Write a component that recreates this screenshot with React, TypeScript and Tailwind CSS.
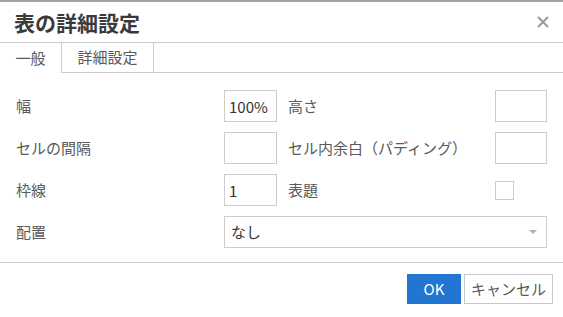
import React from "react";

const font = { fontFamily: '"Noto Sans CJK JP", "Noto Sans", sans-serif' };

function Field({ value = "", w = "w-[53px]" }: { value?: string; w?: string }) {
  return (
    <input
      readOnly
      value={value}
      className={`${w} h-[32px] border border-[#cccccc] bg-white px-[4px] text-[15px] text-[#333333] outline-none`}
    />
  );
}

export default function App() {
  return (
    <div style={font} className="w-[563px] h-[317px] bg-white border-t-2 border-[#a3a3a3] flex flex-col overflow-hidden">
      <div className="h-[41px] flex items-center justify-between pl-[14px] pr-[13px] border-b border-[#cccccc]">
        <div className="text-[21px] font-bold text-[#3a3a3a] leading-none">表の詳細設定</div>
        <svg width="14" height="14" viewBox="0 0 14 14" className="text-[#9a9a9a]">
          <path d="M2 2 L12 12 M12 2 L2 12" stroke="currentColor" strokeWidth="2" />
        </svg>
      </div>

      <div className="flex h-[30px] border-b border-[#cccccc]">
        <div className="w-[62px] -mb-px bg-white border-r border-[#cccccc] flex items-center justify-center text-[15px] text-[#595959]">
          一般
        </div>
        <div className="w-[92px] border-r border-[#cccccc] flex items-center justify-center text-[15px] text-[#595959]">
          詳細設定
        </div>
      </div>

      <div className="flex flex-col gap-[10px] pt-[17px] pl-[16px] pr-[16px] h-[190px] border-b border-[#cccccc] text-[15px] text-[#595959]">
        <div className="flex items-center h-[32px]">
          <div className="w-[208px]">幅</div>
          <Field value="100%" />
          <div className="flex-1 pl-[11px]">高さ</div>
          <Field w="w-[52px]" />
        </div>
        <div className="flex items-center h-[32px]">
          <div className="w-[208px]">セルの間隔</div>
          <Field />
          <div className="flex-1 pl-[11px]">セル内余白（パディング）</div>
          <Field w="w-[52px]" />
        </div>
        <div className="flex items-center h-[32px]">
          <div className="w-[208px]">枠線</div>
          <Field value="1" />
          <div className="flex-1 pl-[11px]">表題</div>
          <div className="w-[52px] flex">
            <div className="w-[19px] h-[19px] border border-[#cccccc] bg-white" />
          </div>
        </div>
        <div className="flex items-center h-[32px]">
          <div className="w-[208px]">配置</div>
          <div className="flex-1 h-[32px] border border-[#cccccc] flex items-center justify-between pl-[6px] pr-[9px] text-[#333333]">
            <span>なし</span>
            <svg width="8" height="5" viewBox="0 0 8 5">
              <path d="M0 0 L8 0 L4 4 Z" fill="#b0b0b0" />
            </svg>
          </div>
        </div>
      </div>

      <div className="flex justify-end gap-[3px] pt-[11px] pr-[10px]">
        <button className="w-[54px] h-[30px] bg-[#2276d2] text-white text-[15px] flex items-center justify-center">
          OK
        </button>
        <button className="w-[89px] h-[30px] bg-white border border-[#c8c8c8] text-[#595959] text-[15px] flex items-center justify-center">
          キャンセル
        </button>
      </div>
    </div>
  );
}
